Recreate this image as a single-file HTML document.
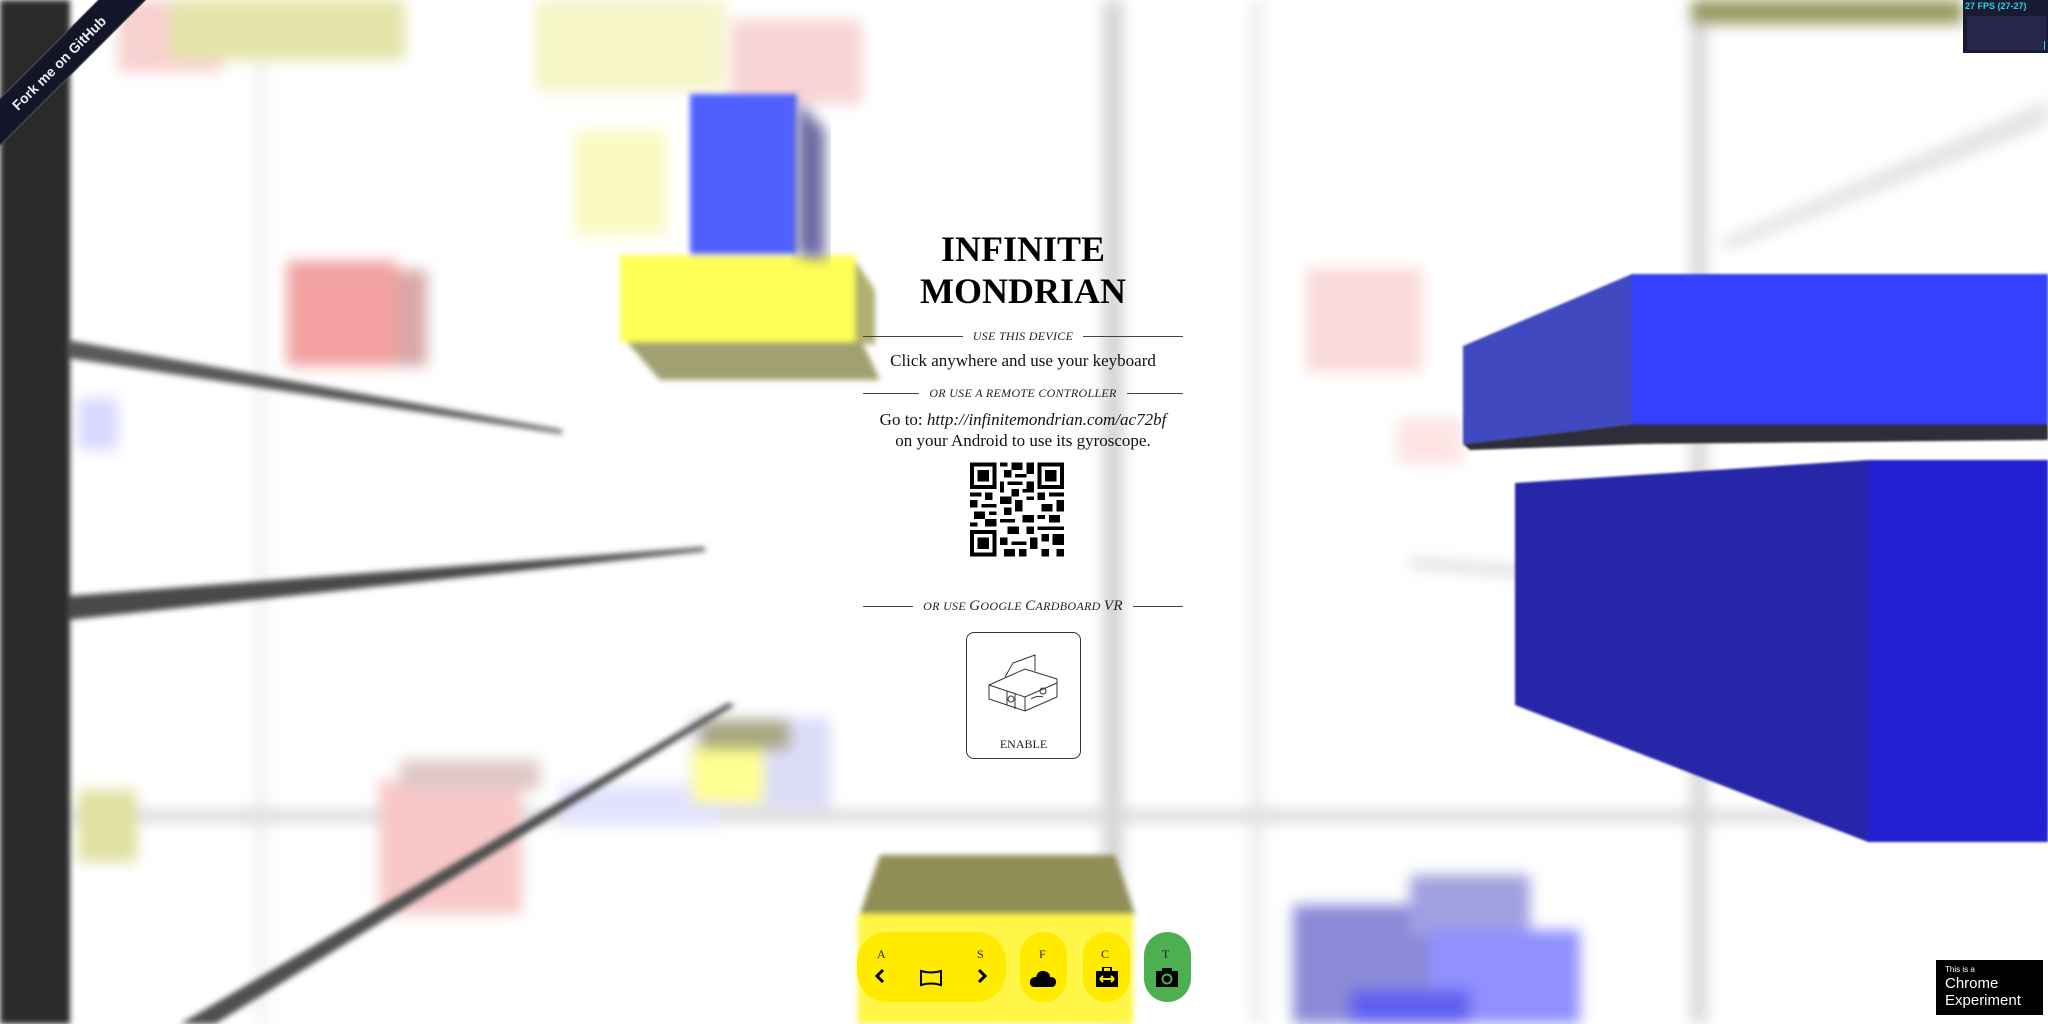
<!DOCTYPE html>
<html><head><meta charset="utf-8">
<style>
html,body{margin:0;padding:0;width:2048px;height:1024px;overflow:hidden;background:#fff;font-family:"Liberation Serif",serif;}
#bg{position:absolute;left:0;top:0;}
.h1{position:absolute;left:863px;width:320px;top:228px;text-align:center;font-weight:bold;font-size:36px;line-height:42px;color:#000;}
.sep{position:absolute;left:863px;width:320px;height:14px;display:flex;align-items:center;font-style:italic;font-size:12px;letter-spacing:0.3px;color:#222;}
.sep:before,.sep:after{content:"";flex:1;border-top:1px solid #444;}
.sep span{padding:0 10px;white-space:nowrap;}
.txt{position:absolute;left:843px;width:360px;text-align:center;font-size:17px;color:#111;line-height:21px;}
.btnwrap{position:absolute;top:932px;height:70px;border-radius:30px;background:#ffea00;}
.lbl{position:absolute;font-size:12px;color:#222;}
</style></head><body>
<svg id="bg" width="2048" height="1024" viewBox="0 0 2048 1024">
<defs>
<filter id="b1" x="-20%" y="-20%" width="140%" height="140%"><feGaussianBlur stdDeviation="7"/></filter>
<filter id="b2" x="-20%" y="-20%" width="140%" height="140%"><feGaussianBlur stdDeviation="3"/></filter>
<filter id="b3"><feGaussianBlur stdDeviation="1"/></filter>
</defs>
<g filter="url(#b1)">
<rect x="255" y="0" width="12" height="1024" fill="#f2f2f2"/>
<rect x="1103" y="0" width="20" height="1024" fill="#d4d4d4"/>
<rect x="1250" y="0" width="14" height="1024" fill="#eeeeee"/>
<rect x="1690" y="0" width="18" height="1024" fill="#dadada"/>
<rect x="68" y="810" width="1980" height="12" fill="#d8d8d8"/>
<rect x="118" y="0" width="104" height="72" fill="#f8d0d0"/>
<rect x="170" y="0" width="235" height="60" fill="#e4e4a8"/>
<rect x="535" y="0" width="190" height="91" fill="#f5f5c8"/>
<rect x="731" y="20" width="131" height="84" fill="#f8d4d4"/>
<rect x="575" y="131" width="91" height="104" fill="#fafac0"/>
<rect x="287" y="261" width="110" height="105" fill="#f2a0a0"/>
<rect x="397" y="270" width="30" height="96" fill="#d8a8a8"/>
<rect x="1306" y="268" width="117" height="104" fill="#fadada"/>
<rect x="1397" y="418" width="66" height="46" fill="#fde4e4"/>
<rect x="78" y="398" width="40" height="52" fill="#d8d8ff"/>
<rect x="379" y="780" width="143" height="134" fill="#f8c8c8"/>
<rect x="400" y="760" width="140" height="30" fill="#e0c8c8"/>
<rect x="560" y="785" width="160" height="40" fill="#e2e2ff"/>
<rect x="690" y="718" width="140" height="90" fill="#dcdcf8"/>
<rect x="692" y="744" width="72" height="59" fill="#ffff90"/>
<rect x="700" y="720" width="90" height="30" fill="#a8a880"/>
<rect x="78" y="790" width="59" height="72" fill="#e0e0a0"/>
<rect x="1691" y="0" width="272" height="24" fill="#9a9a60"/>
<rect x="1293" y="905" width="160" height="119" fill="#8a8ad8"/>
<rect x="1410" y="875" width="120" height="60" fill="#a0a0e0"/>
<rect x="1430" y="930" width="150" height="94" fill="#9090ff"/>
<rect x="1350" y="990" width="120" height="34" fill="#6060f0"/>
<polygon points="2048,100 1720,240 1730,250 2048,125" fill="#e4e4e4"/>
<polygon points="1410,560 1660,578 1660,586 1410,566" fill="#cccccc"/>
</g>
<g filter="url(#b2)">
<rect x="0" y="0" width="70" height="1024" fill="#2b2b2b"/>
<polygon points="68,340 68,358 562,434 562,430" fill="#5a5a5a"/>
<polygon points="68,596 68,620 705,551 705,547" fill="#4a4a4a"/>
<polygon points="180,1024 215,1024 735,705 728,703" fill="#505050"/>
<rect x="690" y="94" width="107" height="161" fill="#5060ff"/>
<polygon points="627,342 862,342 880,380 660,380" fill="#a0a070"/>
<rect x="620" y="255" width="235" height="87" fill="#ffff55"/>
<polygon points="855,260 875,290 875,345 855,342" fill="#b0b070"/>
<polygon points="880,855 1115,855 1135,914 860,914" fill="#8e8e55"/>
<rect x="858" y="914" width="275" height="110" fill="#fff644"/>
</g>
<g filter="url(#b1)">
<polygon points="797,100 825,130 825,260 797,255" fill="#6a6aa0"/>
</g>
<g filter="url(#b3)">
<polygon points="1463,346 1632,274 1632,424 1463,444" fill="#4048c0"/>
<polygon points="1463,444 1632,424 2048,424 2048,440 1640,444 1470,450" fill="#2e2e38"/>
<rect x="1632" y="274" width="416" height="150" fill="#3640ff"/>
<polygon points="1515,483 1868,460 1868,842 1515,705" fill="#2828a8"/>
<rect x="1868" y="460" width="180" height="382" fill="#2222d2"/>
</g>
</svg>

<div style="position:absolute;left:-56px;top:46px;width:230px;height:32px;background:#121628;transform:rotate(-45deg);transform-origin:50% 50%;border-top:1px solid #555;border-bottom:1px solid #555;color:#eee;font-family:'Liberation Sans',sans-serif;font-weight:bold;font-size:14px;line-height:32px;text-align:center;">Fork me on GitHub</div>

<div style="position:absolute;left:1963px;top:0;width:85px;height:53px;background:#1a1a33;">
<div style="position:absolute;left:2px;top:1px;color:#22d8e0;font-family:'Liberation Sans',sans-serif;font-weight:bold;font-size:9px;">27 FPS (27-27)</div>
<div style="position:absolute;left:4px;top:16px;width:79px;height:34px;background:#26264a;"></div>
<div style="position:absolute;left:81px;top:41px;width:1px;height:9px;background:#22d8e0;"></div>
</div>

<div class="h1">INFINITE<br>MONDRIAN</div>
<div class="sep" style="top:329px;"><span>USE THIS DEVICE</span></div>
<div class="txt" style="top:350px;">Click anywhere and use your keyboard</div>
<div class="sep" style="top:386px;"><span>OR USE A REMOTE CONTROLLER</span></div>
<div class="txt" style="top:409px;">Go to: <i>http://infinitemondrian.com/ac72bf</i><br>on your Android to use its gyroscope.</div>

<svg style="position:absolute;left:970px;top:461px" width="94" height="97" viewBox="0 0 25 25" shape-rendering="crispEdges">
<rect width="25" height="25" fill="#fff"/>
<g fill="#000">
<path d="M0 0h7v7h-7zM1 1v5h5v-5zM2 2h3v3h-3z" fill-rule="evenodd"/>
<path d="M18 0h7v7h-7zM19 1v5h5v-5zM20 2h3v3h-3z" fill-rule="evenodd"/>
<path d="M0 18h7v7h-7zM1 19v5h5v-5zM2 20h3v3h-3z" fill-rule="evenodd"/>
<path d="M8 0h2v1h-2zM11 0h3v2h-3zM15 0h2v3h-2zM9 2h2v2h-2zM12 3h3v1h-3zM8 5h1v3h-1zM10 5h4v1h-4zM15 5h2v2h-2zM11 7h2v2h-2zM14 7h3v1h-3z"/>
<path d="M0 8h3v1h-3zM4 8h2v2h-2zM0 10h2v2h-2zM3 11h4v1h-4zM1 13h3v2h-3zM5 13h2v1h-2zM0 16h2v1h-2zM4 15h3v2h-3z"/>
<path d="M8 9h3v2h-3zM12 10h2v3h-2zM15 9h2v1h-2zM9 12h2v2h-2zM14 14h3v2h-3zM8 15h4v1h-4zM10 17h3v2h-3zM15 17h2v2h-2zM18 8h2v2h-2zM21 8h4v1h-4zM19 11h3v2h-3zM23 10h2v3h-2zM18 14h2v1h-2zM21 14h3v2h-3zM18 17h7v1h-7zM19 19h2v2h-2zM22 19h3v3h-3zM8 20h2v2h-2zM11 21h4v1h-4zM16 20h2v3h-2zM9 23h3v2h-3zM13 23h2v2h-2zM19 23h2v2h-2zM23 23h2v2h-2z"/>
</g></svg>

<div class="sep" style="top:599px;"><span>OR USE <span style="font-size:15px;padding:0">G</span>OOGLE <span style="font-size:15px;padding:0">C</span>ARDBOARD <span style="font-size:15px;padding:0">VR</span></span></div>

<div style="position:absolute;left:966px;top:632px;width:113px;height:125px;border:1px solid #333;border-radius:8px;background:#fff;">
<svg style="position:absolute;left:18px;top:16px" width="76" height="74" viewBox="0 0 76 74" fill="none" stroke="#333" stroke-width="1">
<path d="M4 36 L40 20 L72 30 L72 48 L40 62 L4 50 Z"/>
<path d="M4 36 L40 48 L72 34"/><path d="M40 48 L40 62"/>
<path d="M20 28 L28 14 L50 6 L50 22"/>
<path d="M22 42 L22 56 M30 45 L30 60"/>
<circle cx="26" cy="50" r="3"/><circle cx="58" cy="42" r="3"/>
<path d="M46 50 q6 -4 12 -2"/>
</svg>
<div style="position:absolute;left:0;right:0;top:104px;text-align:center;font-size:12px;color:#222;">ENABLE</div>
</div>

<div class="btnwrap" style="left:857px;width:149px;">
<div class="lbl" style="left:20px;top:15px;">A</div>
<div class="lbl" style="left:120px;top:15px;">S</div>
<svg style="position:absolute;left:17px;top:36px" width="12" height="16" viewBox="0 0 12 16"><path d="M9 2 L3 8 L9 14" stroke="#000" stroke-width="3" fill="none"/></svg>
<svg style="position:absolute;left:119px;top:36px" width="12" height="16" viewBox="0 0 12 16"><path d="M3 2 L9 8 L3 14" stroke="#000" stroke-width="3" fill="none"/></svg>
<svg style="position:absolute;left:62px;top:37px" width="24" height="18" viewBox="0 0 24 18"><path d="M2 2 Q12 5 22 2 L22 16 Q12 13 2 16 Z" stroke="#000" stroke-width="2" fill="none"/></svg>
</div>
<div class="btnwrap" style="left:1020px;width:47px;">
<div class="lbl" style="left:19px;top:15px;">F</div>
<svg style="position:absolute;left:9px;top:37px" width="28" height="18" viewBox="0 0 28 18"><path d="M6 18 Q0 18 1 12 Q2 8 7 8 Q9 1 15 2 Q21 3 21 8 Q27 8 27 13 Q27 18 22 18 Z" fill="#000"/></svg>
</div>
<div class="btnwrap" style="left:1083px;width:47px;">
<div class="lbl" style="left:18px;top:15px;">C</div>
<svg style="position:absolute;left:13px;top:35px" width="22" height="20" viewBox="0 0 22 20"><rect x="0" y="4" width="22" height="16" fill="#000"/><rect x="7" y="0" width="8" height="5" fill="none" stroke="#000" stroke-width="2"/><path d="M4 12h14M4 12l3-3M4 12l3 3M18 12l-3-3M18 12l-3 3" stroke="#ffea00" stroke-width="2"/></svg>
</div>
<div class="btnwrap" style="left:1144px;width:47px;background:#4caf50;">
<div class="lbl" style="left:18px;top:15px;">T</div>
<svg style="position:absolute;left:12px;top:35px" width="22" height="20" viewBox="0 0 22 20"><rect x="0" y="4" width="22" height="16" fill="#000"/><rect x="6" y="1" width="10" height="4" fill="#000"/><circle cx="11" cy="12" r="4.5" fill="none" stroke="#4caf50" stroke-width="2"/></svg>
</div>

<div style="position:absolute;left:1936px;top:960px;width:107px;height:55px;background:#000;color:#fff;font-family:'Liberation Sans',sans-serif;">
<div style="position:absolute;left:9px;top:5px;font-size:8px;">This is a</div>
<div style="position:absolute;left:9px;top:15px;font-size:15px;line-height:17px;">Chrome<br>Experiment</div>
</div>
</body></html>
